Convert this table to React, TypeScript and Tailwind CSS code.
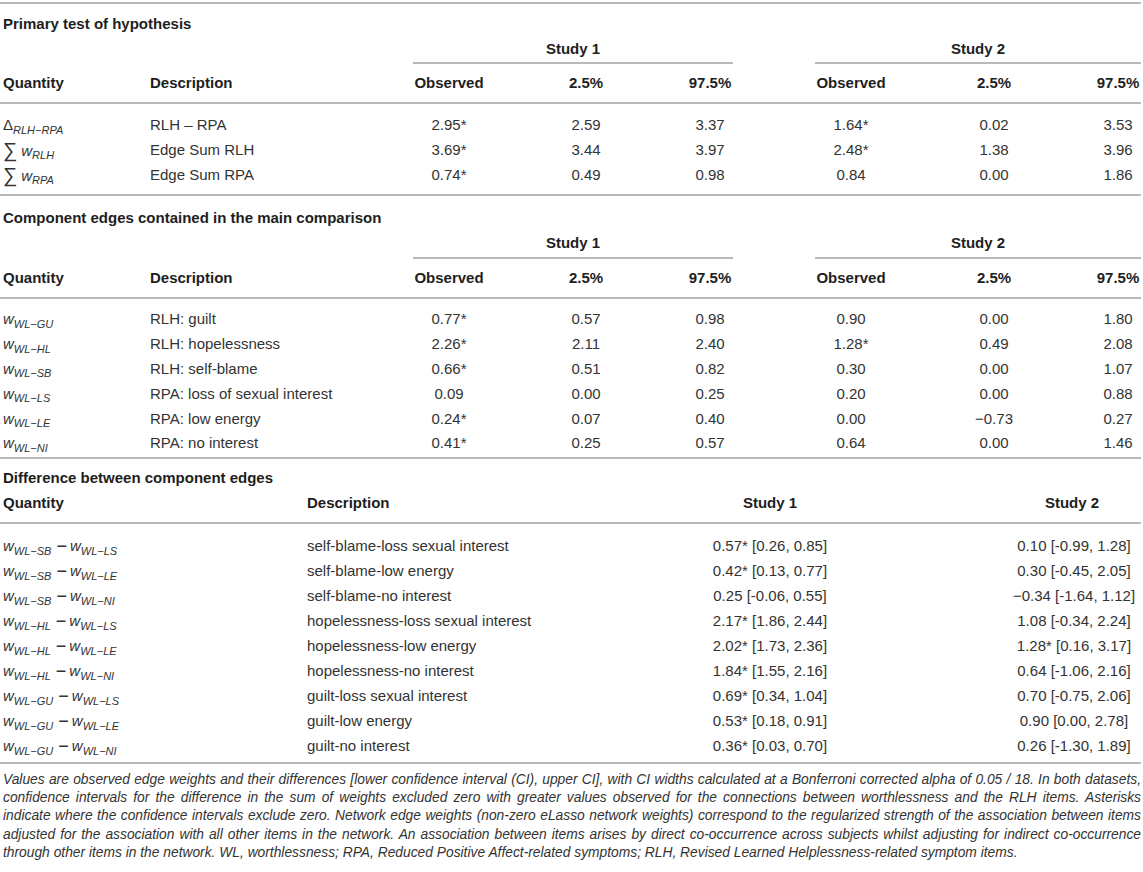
import React from "react";

const LINE = "h-[2px] bg-[#b9b9b9]";

const Sub = ({ children }: { children: React.ReactNode }) => (
  <sub className="italic text-[11px] bottom-[-0.3em]">{children}</sub>
);

const W = ({ s }: { s: string }) => (
  <span className="whitespace-nowrap">
    <span className="italic">w</span>
    <Sub>{s}</Sub>
  </span>
);

const Delta = () => (
  <span className="whitespace-nowrap">
    <span>Δ</span>
    <Sub>RLH−RPA</Sub>
  </span>
);

const SumW = ({ s }: { s: string }) => (
  <span className="whitespace-nowrap">
    <span className="relative top-[1px] mr-[4px] text-[20px] leading-none">∑</span>
    <W s={s} />
  </span>
);

const Diff = ({ a, b }: { a: string; b: string }) => (
  <span className="whitespace-nowrap">
    <W s={a} />
    <span className="relative top-[1px] ml-[5px] mr-[3px] text-[18px] leading-none">−</span>
    <W s={b} />
  </span>
);

type Vals = [string, string, string, string, string, string];

function SixRow({
  q,
  d,
  v,
  bold,
  h,
}: {
  q: React.ReactNode;
  d: React.ReactNode;
  v: Vals;
  bold?: boolean;
  h: string;
}) {
  return (
    <div
      className={`flex items-center ${h} ${
        bold ? "font-bold text-[#1e1e1e]" : "text-[#333333]"
      }`}
    >
      <div className="w-[150px] shrink-0 pl-[3px]">{q}</div>
      <div className="w-[263px] shrink-0">{d}</div>
      <div className="w-[72px] shrink-0 text-center">{v[0]}</div>
      <div className="ml-[65px] w-[72px] shrink-0 text-center">{v[1]}</div>
      <div className="ml-[65px] w-[46px] shrink-0 text-center">{v[2]}</div>
      <div className="ml-[82px] w-[72px] shrink-0 text-center">{v[3]}</div>
      <div className="ml-[71px] w-[72px] shrink-0 text-center">{v[4]}</div>
      <div className="ml-[65px] w-[46px] shrink-0 text-center">{v[5]}</div>
    </div>
  );
}

const HEADER: Vals = ["Observed", "2.5%", "97.5%", "Observed", "2.5%", "97.5%"];

function StudyHeads() {
  return (
    <div className="flex h-[25px] items-center font-bold text-[#1e1e1e]">
      <div className="ml-[413px] w-[320px] text-center">Study 1</div>
      <div className="ml-[82px] w-[326px] text-center">Study 2</div>
    </div>
  );
}

function StudyLines({ mt }: { mt: string }) {
  return (
    <div className={`flex ${mt}`}>
      <div className={`ml-[413px] w-[320px] ${LINE}`} />
      <div className={`ml-[82px] w-[326px] ${LINE}`} />
    </div>
  );
}

const sec1: { q: React.ReactNode; d: string; v: Vals }[] = [
  { q: <Delta />, d: "RLH – RPA", v: ["2.95*", "2.59", "3.37", "1.64*", "0.02", "3.53"] },
  { q: <SumW s="RLH" />, d: "Edge Sum RLH", v: ["3.69*", "3.44", "3.97", "2.48*", "1.38", "3.96"] },
  { q: <SumW s="RPA" />, d: "Edge Sum RPA", v: ["0.74*", "0.49", "0.98", "0.84", "0.00", "1.86"] },
];

const sec2: { q: React.ReactNode; d: string; v: Vals }[] = [
  { q: <W s="WL−GU" />, d: "RLH: guilt", v: ["0.77*", "0.57", "0.98", "0.90", "0.00", "1.80"] },
  { q: <W s="WL−HL" />, d: "RLH: hopelessness", v: ["2.26*", "2.11", "2.40", "1.28*", "0.49", "2.08"] },
  { q: <W s="WL−SB" />, d: "RLH: self-blame", v: ["0.66*", "0.51", "0.82", "0.30", "0.00", "1.07"] },
  { q: <W s="WL−LS" />, d: "RPA: loss of sexual interest", v: ["0.09", "0.00", "0.25", "0.20", "0.00", "0.88"] },
  { q: <W s="WL−LE" />, d: "RPA: low energy", v: ["0.24*", "0.07", "0.40", "0.00", "−0.73", "0.27"] },
  { q: <W s="WL−NI" />, d: "RPA: no interest", v: ["0.41*", "0.25", "0.57", "0.64", "0.00", "1.46"] },
];

const sec3: [string, string, string, string, string][] = [
  ["WL−SB", "WL−LS", "self-blame-loss sexual interest", "0.57* [0.26, 0.85]", "0.10 [-0.99, 1.28]"],
  ["WL−SB", "WL−LE", "self-blame-low energy", "0.42* [0.13, 0.77]", "0.30 [-0.45, 2.05]"],
  ["WL−SB", "WL−NI", "self-blame-no interest", "0.25 [-0.06, 0.55]", "−0.34 [-1.64, 1.12]"],
  ["WL−HL", "WL−LS", "hopelessness-loss sexual interest", "2.17* [1.86, 2.44]", "1.08 [-0.34, 2.24]"],
  ["WL−HL", "WL−LE", "hopelessness-low energy", "2.02* [1.73, 2.36]", "1.28* [0.16, 3.17]"],
  ["WL−HL", "WL−NI", "hopelessness-no interest", "1.84* [1.55, 2.16]", "0.64 [-1.06, 2.16]"],
  ["WL−GU", "WL−LS", "guilt-loss sexual interest", "0.69* [0.34, 1.04]", "0.70 [-0.75, 2.06]"],
  ["WL−GU", "WL−LE", "guilt-low energy", "0.53* [0.18, 0.91]", "0.90 [0.00, 2.78]"],
  ["WL−GU", "WL−NI", "guilt-no interest", "0.36* [0.03, 0.70]", "0.26 [-1.30, 1.89]"],
];

const foot = [
  "Values are observed edge weights and their differences [lower confidence interval (CI), upper CI], with CI widths calculated at a Bonferroni corrected alpha of 0.05 / 18. In both datasets,",
  "confidence intervals for the difference in the sum of weights excluded zero with greater values observed for the connections between worthlessness and the RLH items. Asterisks",
  "indicate where the confidence intervals exclude zero. Network edge weights (non-zero eLasso network weights) correspond to the regularized strength of the association between items",
  "adjusted for the association with all other items in the network. An association between items arises by direct co-occurrence across subjects whilst adjusting for indirect co-occurrence",
  "through other items in the network. WL, worthlessness; RPA, Reduced Positive Affect-related symptoms; RLH, Revised Learned Helplessness-related symptom items.",
];

export default function App() {
  return (
    <div className="min-h-screen bg-white">
      <div className="w-[1141px] font-['Liberation_Sans',Arial,sans-serif] text-[15px] leading-[20px] text-[#333333]">
        {/* Section 1 */}
        <div className={`mt-[2px] ${LINE}`} />
        <div className="pt-[7px]">
          <div className="flex h-[25px] items-center pl-[3px] font-bold text-[#1e1e1e]">
            Primary test of hypothesis
          </div>
        </div>
        <StudyHeads />
        <StudyLines mt="mt-[1px]" />
        <SixRow q="Quantity" d="Description" v={HEADER} bold h="h-[37px]" />
        <div className={`mt-[1px] ${LINE}`} />
        <div className="pt-[9px] pb-[7px]">
          {sec1.map((r, i) => (
            <SixRow key={i} q={r.q} d={r.d} v={r.v} h="h-[24.7px]" />
          ))}
        </div>
        <div className={LINE} />

        {/* Section 2 */}
        <div className="pt-[9px]">
          <div className="flex h-[25px] items-center pl-[3px] font-bold text-[#1e1e1e]">
            Component edges contained in the main comparison
          </div>
        </div>
        <StudyHeads />
        <StudyLines mt="mt-[2px]" />
        <SixRow q="Quantity" d="Description" v={HEADER} bold h="h-[38px]" />
        <div className={LINE} />
        <div className="pt-[8px] pb-[1px]">
          {sec2.map((r, i) => (
            <SixRow key={i} q={r.q} d={r.d} v={r.v} h="h-[24.8px]" />
          ))}
        </div>
        <div className={LINE} />

        {/* Section 3 */}
        <div className="pt-[7px]">
          <div className="flex h-[25px] items-center pl-[3px] font-bold text-[#1e1e1e]">
            Difference between component edges
          </div>
        </div>
        <div className="flex h-[25px] items-center font-bold text-[#1e1e1e]">
          <div className="w-[307px] shrink-0 pl-[3px]">Quantity</div>
          <div className="w-[373px] shrink-0">Description</div>
          <div className="w-[180px] shrink-0 text-center">Study 1</div>
          <div className="ml-[145px] w-[134px] shrink-0 text-center">Study 2</div>
        </div>
        <div className={`mt-[6px] ${LINE}`} />
        <div className="pt-[10px] pb-[3px]">
          {sec3.map((r, i) => (
            <div key={i} className="flex h-[25px] items-center">
              <div className="w-[307px] shrink-0 pl-[3px]">
                <Diff a={r[0]} b={r[1]} />
              </div>
              <div className="w-[373px] shrink-0">{r[2]}</div>
              <div className="w-[180px] shrink-0 whitespace-nowrap text-center">{r[3]}</div>
              <div className="ml-[147px] w-[134px] shrink-0 whitespace-nowrap text-center">{r[4]}</div>
            </div>
          ))}
        </div>
        <div className={LINE} />

        {/* Footnote */}
        <div className="pt-[7px] pl-[3px] text-[13.8px] italic leading-[18.25px] text-[#333333]">
          {foot.map((t, i) => (
            <div
              key={i}
              className={`whitespace-nowrap ${
                i < foot.length - 1 ? "text-justify [text-align-last:justify]" : ""
              }`}
            >
              {t}
            </div>
          ))}
        </div>
      </div>
    </div>
  );
}
